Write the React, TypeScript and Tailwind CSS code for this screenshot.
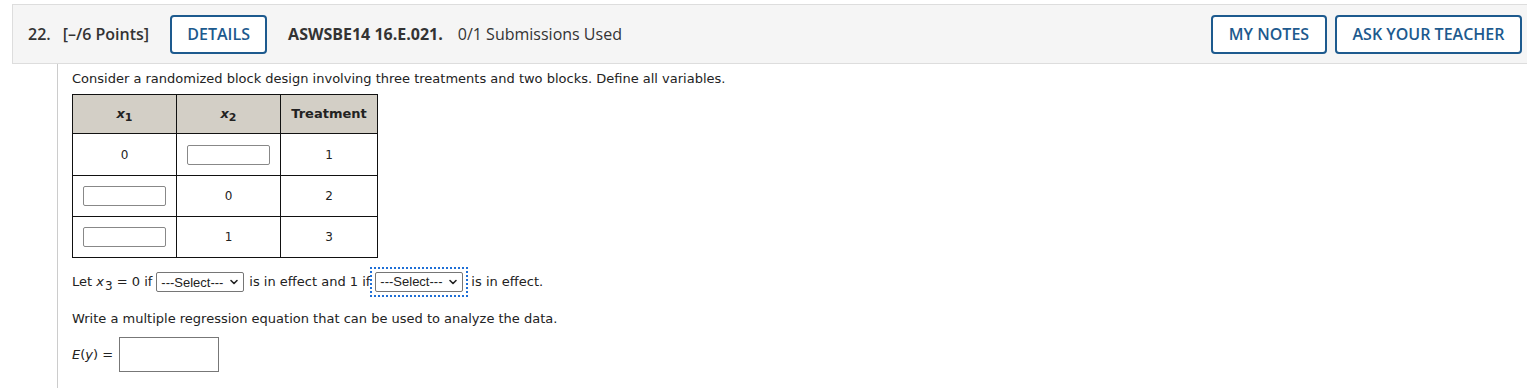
import React from 'react';

// chevron used by the two select boxes
function Chevron() {
  return (
    <svg width="10" height="10" viewBox="0 0 10 10" className="shrink-0">
      <path d="M2 3.5 L5 6.5 L8 3.5" fill="none" stroke="#222" strokeWidth="1.6" strokeLinecap="round" strokeLinejoin="round" />
    </svg>
  );
}

function SelectBox() {
  return (
    <span className="inline-flex items-center justify-between w-[88px] h-[20px] border border-[#767676] rounded-[2px] bg-white pl-[4px] pr-[4px] align-middle text-[13px] text-[#222] font-['Liberation_Sans',Arial,sans-serif]">
      <span>---Select---</span>
      <Chevron />
    </span>
  );
}

function TextBox({ w }: { w: string }) {
  return <span className={`inline-block ${w} h-[20px] border border-[#888] rounded-[2px] bg-white align-middle`} />;
}

export default function App() {
  return (
    <div className="min-h-screen bg-white pt-[4px] pl-[12px] text-[#333]">
      {/* question header */}
      <div className="h-[60px] flex items-center justify-between border border-r-0 border-[#ddd] bg-[#f5f5f5] pl-[15px] pr-[5px] font-['Open_Sans',sans-serif] text-[16px]">
        <div className="flex items-center">
          <span className="font-semibold">22.</span>
          <span className="font-semibold ml-[12px]">[–/6 Points]</span>
          <button className="ml-[21px] w-[97px] h-[39px] border-2 border-[#1d5a8e] rounded-[4px] bg-white text-[#1d5a8e] font-semibold text-[16px]">DETAILS</button>
          <span className="ml-[21px] font-bold">ASWSBE14 16.E.021.</span>
          <span className="ml-[15px]">0/1 Submissions Used</span>
        </div>
        <div className="flex items-center gap-[8px]">
          <button className="w-[116px] h-[39px] border-2 border-[#1d5a8e] rounded-[4px] bg-white text-[#1d5a8e] font-semibold text-[16px]">MY NOTES</button>
          <button className="w-[187px] h-[39px] border-2 border-[#1d5a8e] rounded-[4px] bg-white text-[#1d5a8e] font-semibold text-[16px]">ASK YOUR TEACHER</button>
        </div>
      </div>

      {/* question body */}
      <div className="ml-[45px] border-l border-[#ccc] pl-[14px] pt-[7px] pb-[20px] font-['DejaVu_Sans',Verdana,sans-serif] text-[13px] text-[#222]">
        <p className="leading-[16px]">Consider a randomized block design involving three treatments and two blocks. Define all variables.</p>

        <table className="mt-[7px] border-collapse border border-[#111]">
          <thead>
            <tr className="bg-[#d3cfc6] h-[39px]">
              <th className="w-[104px] border border-[#111] font-bold"><i>x</i><sub className="text-[11px]">1</sub></th>
              <th className="w-[104px] border border-[#111] font-bold"><i>x</i><sub className="text-[11px]">2</sub></th>
              <th className="w-[97px] border border-[#111] font-bold">Treatment</th>
            </tr>
          </thead>
          <tbody className="text-[12px] text-center">
            <tr className="h-[42px]">
              <td className="border border-[#111]">0</td>
              <td className="border border-[#111]"><TextBox w="w-[83px]" /></td>
              <td className="border border-[#111]">1</td>
            </tr>
            <tr className="h-[41px]">
              <td className="border border-[#111]"><TextBox w="w-[83px]" /></td>
              <td className="border border-[#111]">0</td>
              <td className="border border-[#111]">2</td>
            </tr>
            <tr className="h-[41px]">
              <td className="border border-[#111]"><TextBox w="w-[83px]" /></td>
              <td className="border border-[#111]">1</td>
              <td className="border border-[#111]">3</td>
            </tr>
          </tbody>
        </table>

        <div className="mt-[9px] flex items-center h-[30px]">
          <span>Let <i>x</i><sub className="text-[12px] relative top-[4px] ml-[1px]">3</sub> = 0 if</span>
          <span className="ml-[4px]"><SelectBox /></span>
          <span className="ml-[5px]">is in effect and 1 if</span>
          <span className="inline-flex border-2 border-dotted border-[#1f6fd6] p-[3px]"><SelectBox /></span>
          <span className="ml-[3px]">is in effect.</span>
        </div>

        <p className="mt-[14px] leading-[16px]">Write a multiple regression equation that can be used to analyze the data.</p>

        <div className="mt-[10px] flex items-center">
          <span><i>E</i>(<i>y</i>) =</span>
          <span className="ml-[6px] inline-block w-[100px] h-[35px] border border-[#777] bg-white" />
        </div>
      </div>
    </div>
  );
}
